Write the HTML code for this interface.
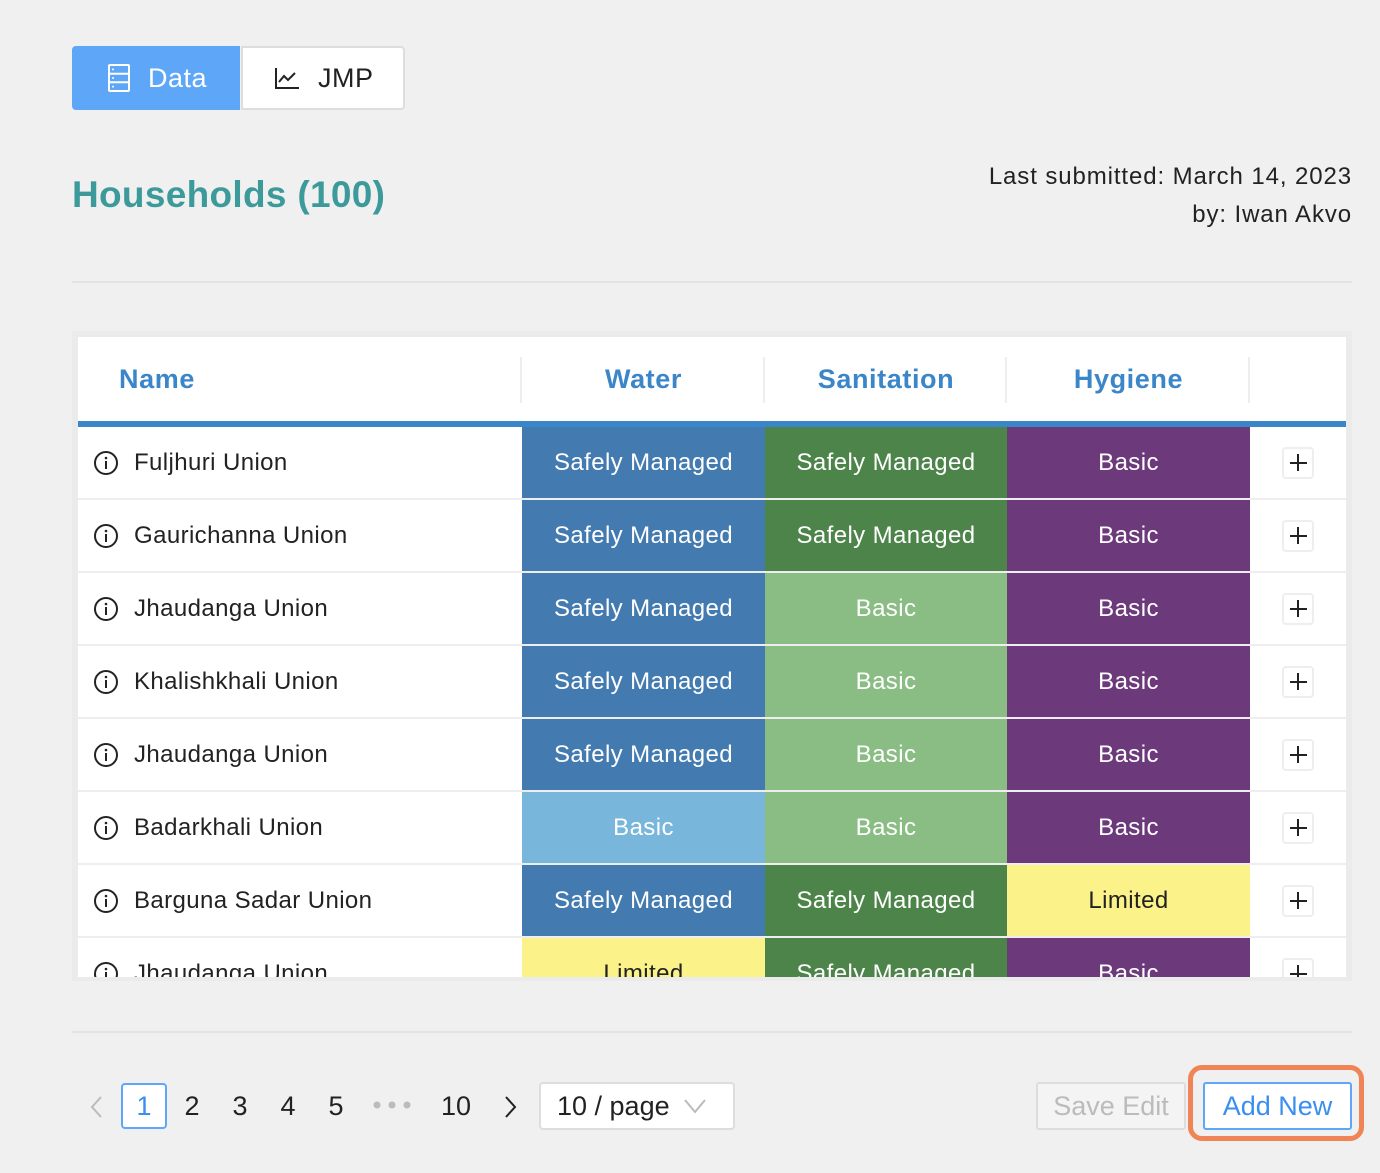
<!DOCTYPE html>
<html><head><style>
*{box-sizing:border-box;margin:0;padding:0}
body{width:1380px;height:1173px;background:#f0f0f0;font-family:"Liberation Sans",sans-serif;position:relative;overflow:hidden;color:#222}
.abs{position:absolute}
.tab{position:absolute;top:46px;height:64px;display:flex;align-items:center;font-size:27px;letter-spacing:0.5px}
.wrap{position:absolute;left:72px;top:331px;width:1280px;height:650px;background:#ebebeb}
.card{position:absolute;left:78px;top:337px;width:1268px;height:640px;background:#fff;overflow:hidden}
.hd{position:absolute;top:0;height:84px;font-size:27px;font-weight:bold;color:#3a86c8;display:flex;align-items:center;justify-content:center;letter-spacing:0.6px}
.sep{position:absolute;top:20px;width:2px;height:46px;background:#eee}
.row{position:absolute;left:0;width:1268px;height:71px}
.c{position:absolute;top:0;height:71px;display:flex;align-items:center;justify-content:center;font-size:24px;color:#fff;letter-spacing:0.4px}
.nm{left:0;width:444px;justify-content:flex-start;padding-left:16px;color:#222}
.w{left:444px;width:243px}.s{left:687px;width:242px}.h{left:929px;width:243px}
.a{left:1172px;width:96px}
.plus{width:32px;height:32px;border:2px solid #eee;border-radius:4px;position:relative}
.plus:before{content:"";position:absolute;left:6px;top:13px;width:17px;height:2px;background:#222}
.plus:after{content:"";position:absolute;left:13px;top:5px;width:2px;height:17px;background:#222}
.db{background:#437bb0}.lb{background:#78b6db}.dg{background:#4c844a}.lg{background:#8abd83}.pu{background:#6c3a7b}.ye{background:#fbf28a;color:#222}
.info{width:24px;height:24px;margin-right:16px;display:block}
.pg{position:absolute;top:1084px;height:44px;font-size:27px;display:flex;align-items:center;justify-content:center;width:40px}
</style></head><body>
<div class="tab" style="left:72px;width:168px;background:#5ea7f8;color:#fff;border-radius:4px 0 0 4px;padding-left:34px">
<svg width="26" height="30" viewBox="0 0 26 30" style="margin-right:16px"><g fill="none" stroke="#fff" stroke-width="2"><rect x="3" y="2" width="20" height="26" rx="1"/><line x1="3" y1="10.7" x2="23" y2="10.7"/><line x1="3" y1="19.3" x2="23" y2="19.3"/></g><g fill="#fff"><circle cx="7" cy="6.4" r="1"/><circle cx="7" cy="15" r="1"/><circle cx="7" cy="23.6" r="1"/></g></svg>Data</div>
<div class="tab" style="left:241px;width:164px;background:#fff;border:2px solid #ddd;border-radius:0 4px 4px 0;padding-left:31px">
<svg width="26" height="24" viewBox="0 0 26 24" style="margin-right:18px"><path d="M2 2V22H25M5 16L10 10L14 14L21 7" fill="none" stroke="#222" stroke-width="2"/></svg>JMP</div>
<div class="abs" style="left:72px;top:174px;font-size:37px;font-weight:bold;color:#3d9a9a;letter-spacing:0.3px">Households (100)</div>
<div class="abs" style="right:28px;top:158px;font-size:24px;text-align:right;line-height:38px;letter-spacing:0.9px">Last submitted: March 14, 2023<br>by: Iwan Akvo</div>
<div class="abs" style="left:72px;top:281px;width:1280px;height:2px;background:#e3e3e3"></div>
<div class="wrap"></div>
<div class="card">
<div class="hd" style="left:41px;justify-content:flex-start">Name</div>
<div class="sep" style="left:442px"></div>
<div class="hd" style="left:444px;width:243px">Water</div>
<div class="sep" style="left:685px"></div>
<div class="hd" style="left:687px;width:242px">Sanitation</div>
<div class="sep" style="left:927px"></div>
<div class="hd" style="left:929px;width:243px">Hygiene</div>
<div class="sep" style="left:1170px"></div>
<div class="abs" style="left:0;top:84px;width:1268px;height:6px;background:#3a86c8"></div>
<div class="abs" style="left:0;top:90px;width:1268px;height:600px;background:#eee"></div>
<svg width="0" height="0" style="position:absolute"><defs><g id="ic"><circle cx="12" cy="12" r="11" fill="none" stroke="#222" stroke-width="2"/><rect x="11" y="10" width="2" height="8" fill="#222"/><circle cx="12" cy="7" r="1.3" fill="#222"/></g></defs></svg>
<div class="row" style="top:90px"><div class="c nm" style="background:#fff"><svg class="info" viewBox="0 0 24 24"><use href="#ic"/></svg>Fuljhuri Union</div><div class="c w db">Safely Managed</div><div class="c s dg">Safely Managed</div><div class="c h pu">Basic</div><div class="c a" style="background:#fff"><div class="plus"></div></div></div>
<div class="row" style="top:163px"><div class="c nm" style="background:#fff"><svg class="info" viewBox="0 0 24 24"><use href="#ic"/></svg>Gaurichanna Union</div><div class="c w db">Safely Managed</div><div class="c s dg">Safely Managed</div><div class="c h pu">Basic</div><div class="c a" style="background:#fff"><div class="plus"></div></div></div>
<div class="row" style="top:236px"><div class="c nm" style="background:#fff"><svg class="info" viewBox="0 0 24 24"><use href="#ic"/></svg>Jhaudanga Union</div><div class="c w db">Safely Managed</div><div class="c s lg">Basic</div><div class="c h pu">Basic</div><div class="c a" style="background:#fff"><div class="plus"></div></div></div>
<div class="row" style="top:309px"><div class="c nm" style="background:#fff"><svg class="info" viewBox="0 0 24 24"><use href="#ic"/></svg>Khalishkhali Union</div><div class="c w db">Safely Managed</div><div class="c s lg">Basic</div><div class="c h pu">Basic</div><div class="c a" style="background:#fff"><div class="plus"></div></div></div>
<div class="row" style="top:382px"><div class="c nm" style="background:#fff"><svg class="info" viewBox="0 0 24 24"><use href="#ic"/></svg>Jhaudanga Union</div><div class="c w db">Safely Managed</div><div class="c s lg">Basic</div><div class="c h pu">Basic</div><div class="c a" style="background:#fff"><div class="plus"></div></div></div>
<div class="row" style="top:455px"><div class="c nm" style="background:#fff"><svg class="info" viewBox="0 0 24 24"><use href="#ic"/></svg>Badarkhali Union</div><div class="c w lb">Basic</div><div class="c s lg">Basic</div><div class="c h pu">Basic</div><div class="c a" style="background:#fff"><div class="plus"></div></div></div>
<div class="row" style="top:528px"><div class="c nm" style="background:#fff"><svg class="info" viewBox="0 0 24 24"><use href="#ic"/></svg>Barguna Sadar Union</div><div class="c w db">Safely Managed</div><div class="c s dg">Safely Managed</div><div class="c h ye">Limited</div><div class="c a" style="background:#fff"><div class="plus"></div></div></div>
<div class="row" style="top:601px"><div class="c nm" style="background:#fff"><svg class="info" viewBox="0 0 24 24"><use href="#ic"/></svg>Jhaudanga Union</div><div class="c w ye">Limited</div><div class="c s dg">Safely Managed</div><div class="c h pu">Basic</div><div class="c a" style="background:#fff"><div class="plus"></div></div></div>
</div>
<div class="abs" style="left:72px;top:1031px;width:1280px;height:2px;background:#e3e3e3"></div>
<svg class="abs" style="left:88px;top:1095px" width="16" height="24" viewBox="0 0 16 24"><path d="M13 2L4 12L13 22" fill="none" stroke="#bbb" stroke-width="2"/></svg>
<div class="pg" style="left:121px;width:46px;height:46px;top:1083px;border:2px solid #5ea7f8;border-radius:4px;color:#3a8ef0;background:#fff">1</div>
<div class="pg" style="left:172px">2</div>
<div class="pg" style="left:220px">3</div>
<div class="pg" style="left:268px">4</div>
<div class="pg" style="left:316px">5</div>
<svg class="abs" style="left:372px;top:1100px" width="40" height="10"><circle cx="5" cy="5" r="3.5" fill="#bbb"/><circle cx="20" cy="5" r="3.5" fill="#bbb"/><circle cx="35" cy="5" r="3.5" fill="#bbb"/></svg>
<div class="pg" style="left:432px;width:48px">10</div>
<svg class="abs" style="left:503px;top:1095px" width="16" height="24" viewBox="0 0 16 24"><path d="M3 2L12 12L3 22" fill="none" stroke="#222" stroke-width="2"/></svg>
<div class="abs" style="left:539px;top:1082px;width:196px;height:48px;background:#fff;border:2px solid #ddd;border-radius:4px;font-size:27px;display:flex;align-items:center;padding-left:16px">10 / page<svg style="margin-left:14px" width="22" height="14" viewBox="0 0 22 14"><path d="M1 1L11 13L21 1" fill="none" stroke="#bbb" stroke-width="2"/></svg></div>
<div class="abs" style="left:1036px;top:1082px;width:150px;height:48px;background:#f4f4f4;border:2px solid #ddd;border-radius:3px;color:#bbb;font-size:27px;display:flex;align-items:center;justify-content:center">Save Edit</div>
<div class="abs" style="left:1188px;top:1065px;width:176px;height:76px;border:5px solid #ef8457;border-radius:14px"></div>
<div class="abs" style="left:1203px;top:1082px;width:149px;height:48px;background:#fff;border:2px solid #5ea7f8;border-radius:3px;color:#3a8ef0;font-size:27px;display:flex;align-items:center;justify-content:center">Add New</div>
</body></html>
